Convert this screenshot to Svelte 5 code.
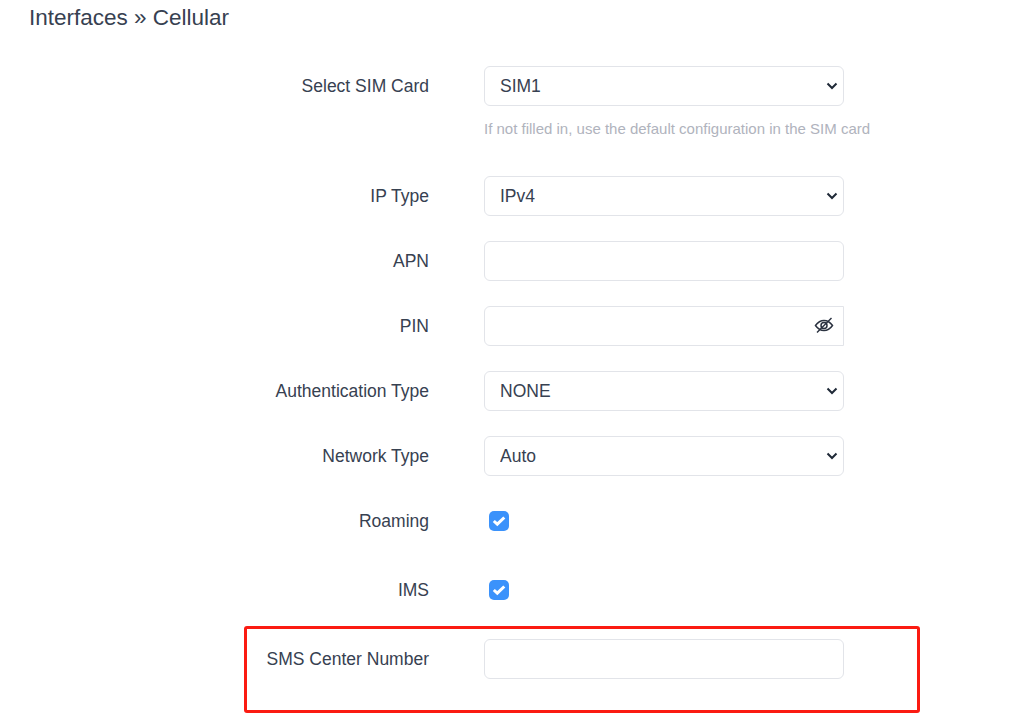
<script>
	const yesNo = [
		{ label: 'Roaming' },
		{ label: 'IMS' }
	];
</script>

{#snippet dropdown(label, value)}
	<div class="row">
		<span class="label">{label}</span>
		<div class="control select-wrap">
			<select class="field">
				<option>{value}</option>
			</select>
			<svg class="chevron" viewBox="0 0 12 8" width="12" height="8" aria-hidden="true">
				<path d="M1.5 1.5 6 6l4.5-4.5" fill="none" stroke="#1f2937" stroke-width="2" />
			</svg>
		</div>
	</div>
{/snippet}

<main class="page">
	<h1>Interfaces » Cellular</h1>

	<form class="form">
		<div class="row with-help">
			<span class="label">Select SIM Card</span>
			<div class="control">
				<div class="select-wrap">
					<select class="field">
						<option>SIM1</option>
					</select>
					<svg class="chevron" viewBox="0 0 12 8" width="12" height="8" aria-hidden="true">
						<path d="M1.5 1.5 6 6l4.5-4.5" fill="none" stroke="#1f2937" stroke-width="2" />
					</svg>
				</div>
				<p class="help">If not filled in, use the default configuration in the SIM card</p>
			</div>
		</div>

		{@render dropdown('IP Type', 'IPv4')}

		<div class="row">
			<span class="label">APN</span>
			<div class="control"><input class="field" type="text" /></div>
		</div>

		<div class="row">
			<span class="label">PIN</span>
			<div class="control pin">
				<input class="field" type="password" />
				<svg class="eye" viewBox="0 0 20 18" width="20" height="18" aria-hidden="true">
					<path
						d="M1.500 8.500C4 5 6.800 3.500 10 3.500s6 1.500 8.500 5c-2.500 3.500-5.300 5-8.500 5s-6-1.500-8.500-5Z"
						fill="none"
						stroke="#2b3240"
						stroke-width="1.500"
					/>
					<circle cx="10" cy="8.500" r="3" fill="none" stroke="#2b3240" stroke-width="1.500" />
					<path d="M3 15.500 17.500 1" fill="none" stroke="#2b3240" stroke-width="1.500" />
				</svg>
			</div>
		</div>

		{@render dropdown('Authentication Type', 'NONE')}
		{@render dropdown('Network Type', 'Auto')}

		{#each yesNo as item}
			<div class="row check-row">
				<span class="label">{item.label}</span>
				<div class="control">
					<span class="checkbox">
						<svg viewBox="0 0 20 20" width="20" height="20" aria-hidden="true">
							<path d="M4.800 10 8.300 13.200 15.300 6.500" fill="none" stroke="#fff" stroke-width="3" />
						</svg>
					</span>
				</div>
			</div>
		{/each}

		<div class="row">
			<span class="label">SMS Center Number</span>
			<div class="control"><input class="field" type="text" /></div>
		</div>
	</form>

	<div class="highlight"></div>
</main>

<style>
	:global(body) {
		margin: 0;
		background: #fff;
		overflow: hidden;
	}

	.page {
		position: relative;
		height: 714px;
		overflow: hidden;
		font-family: 'Liberation Sans', Arial, sans-serif;
		color: #374151;
	}

	h1 {
		margin: 0;
		padding: 5px 0 0 29px;
		height: 66px;
		box-sizing: border-box;
		font-size: 22.500px;
		line-height: 26px;
		font-weight: 400;
	}

	.row {
		display: flex;
		margin-bottom: 25px;
		min-height: 40px;
	}

	.with-help {
		margin-bottom: 25px;
		height: 85px;
	}

	.check-row {
		height: 44px;
	}

	.label {
		width: 429px;
		flex: none;
		text-align: right;
		font-size: 17.500px;
		line-height: 40px;
		white-space: nowrap;
	}

	.control {
		position: relative;
		width: 360px;
		margin-left: 55px;
		flex: none;
	}

	.select-wrap {
		position: relative;
	}

	.form > .row > .select-wrap {
		height: 40px;
	}

	.field {
		display: block;
		width: 100%;
		height: 40px;
		box-sizing: border-box;
		padding: 0 15px;
		border: 1px solid #e2e4e9;
		border-radius: 6px;
		background: #fff;
		color: #374151;
		font-family: inherit;
		font-size: 17.500px;
		appearance: none;
		outline: none;
	}

	.chevron {
		position: absolute;
		right: 6px;
		top: 16px;
		pointer-events: none;
	}

	.pin .field {
		border-radius: 6px 0 0 6px;
	}

	.eye {
		position: absolute;
		right: 10px;
		top: 11px;
	}

	.help {
		margin: 13px 0 0;
		font-size: 15px;
		line-height: 20px;
		color: #b0b3bd;
		white-space: nowrap;
	}

	.checkbox {
		display: block;
		width: 20px;
		height: 20px;
		margin: 10px 0 0 5px;
		border-radius: 5px;
		background: #3b92fb;
	}

	.checkbox svg {
		display: block;
	}

	.highlight {
		position: absolute;
		left: 244px;
		top: 626px;
		width: 670px;
		height: 81px;
		border: 3px solid #fb1b12;
		border-radius: 3px;
		pointer-events: none;
	}
</style>
